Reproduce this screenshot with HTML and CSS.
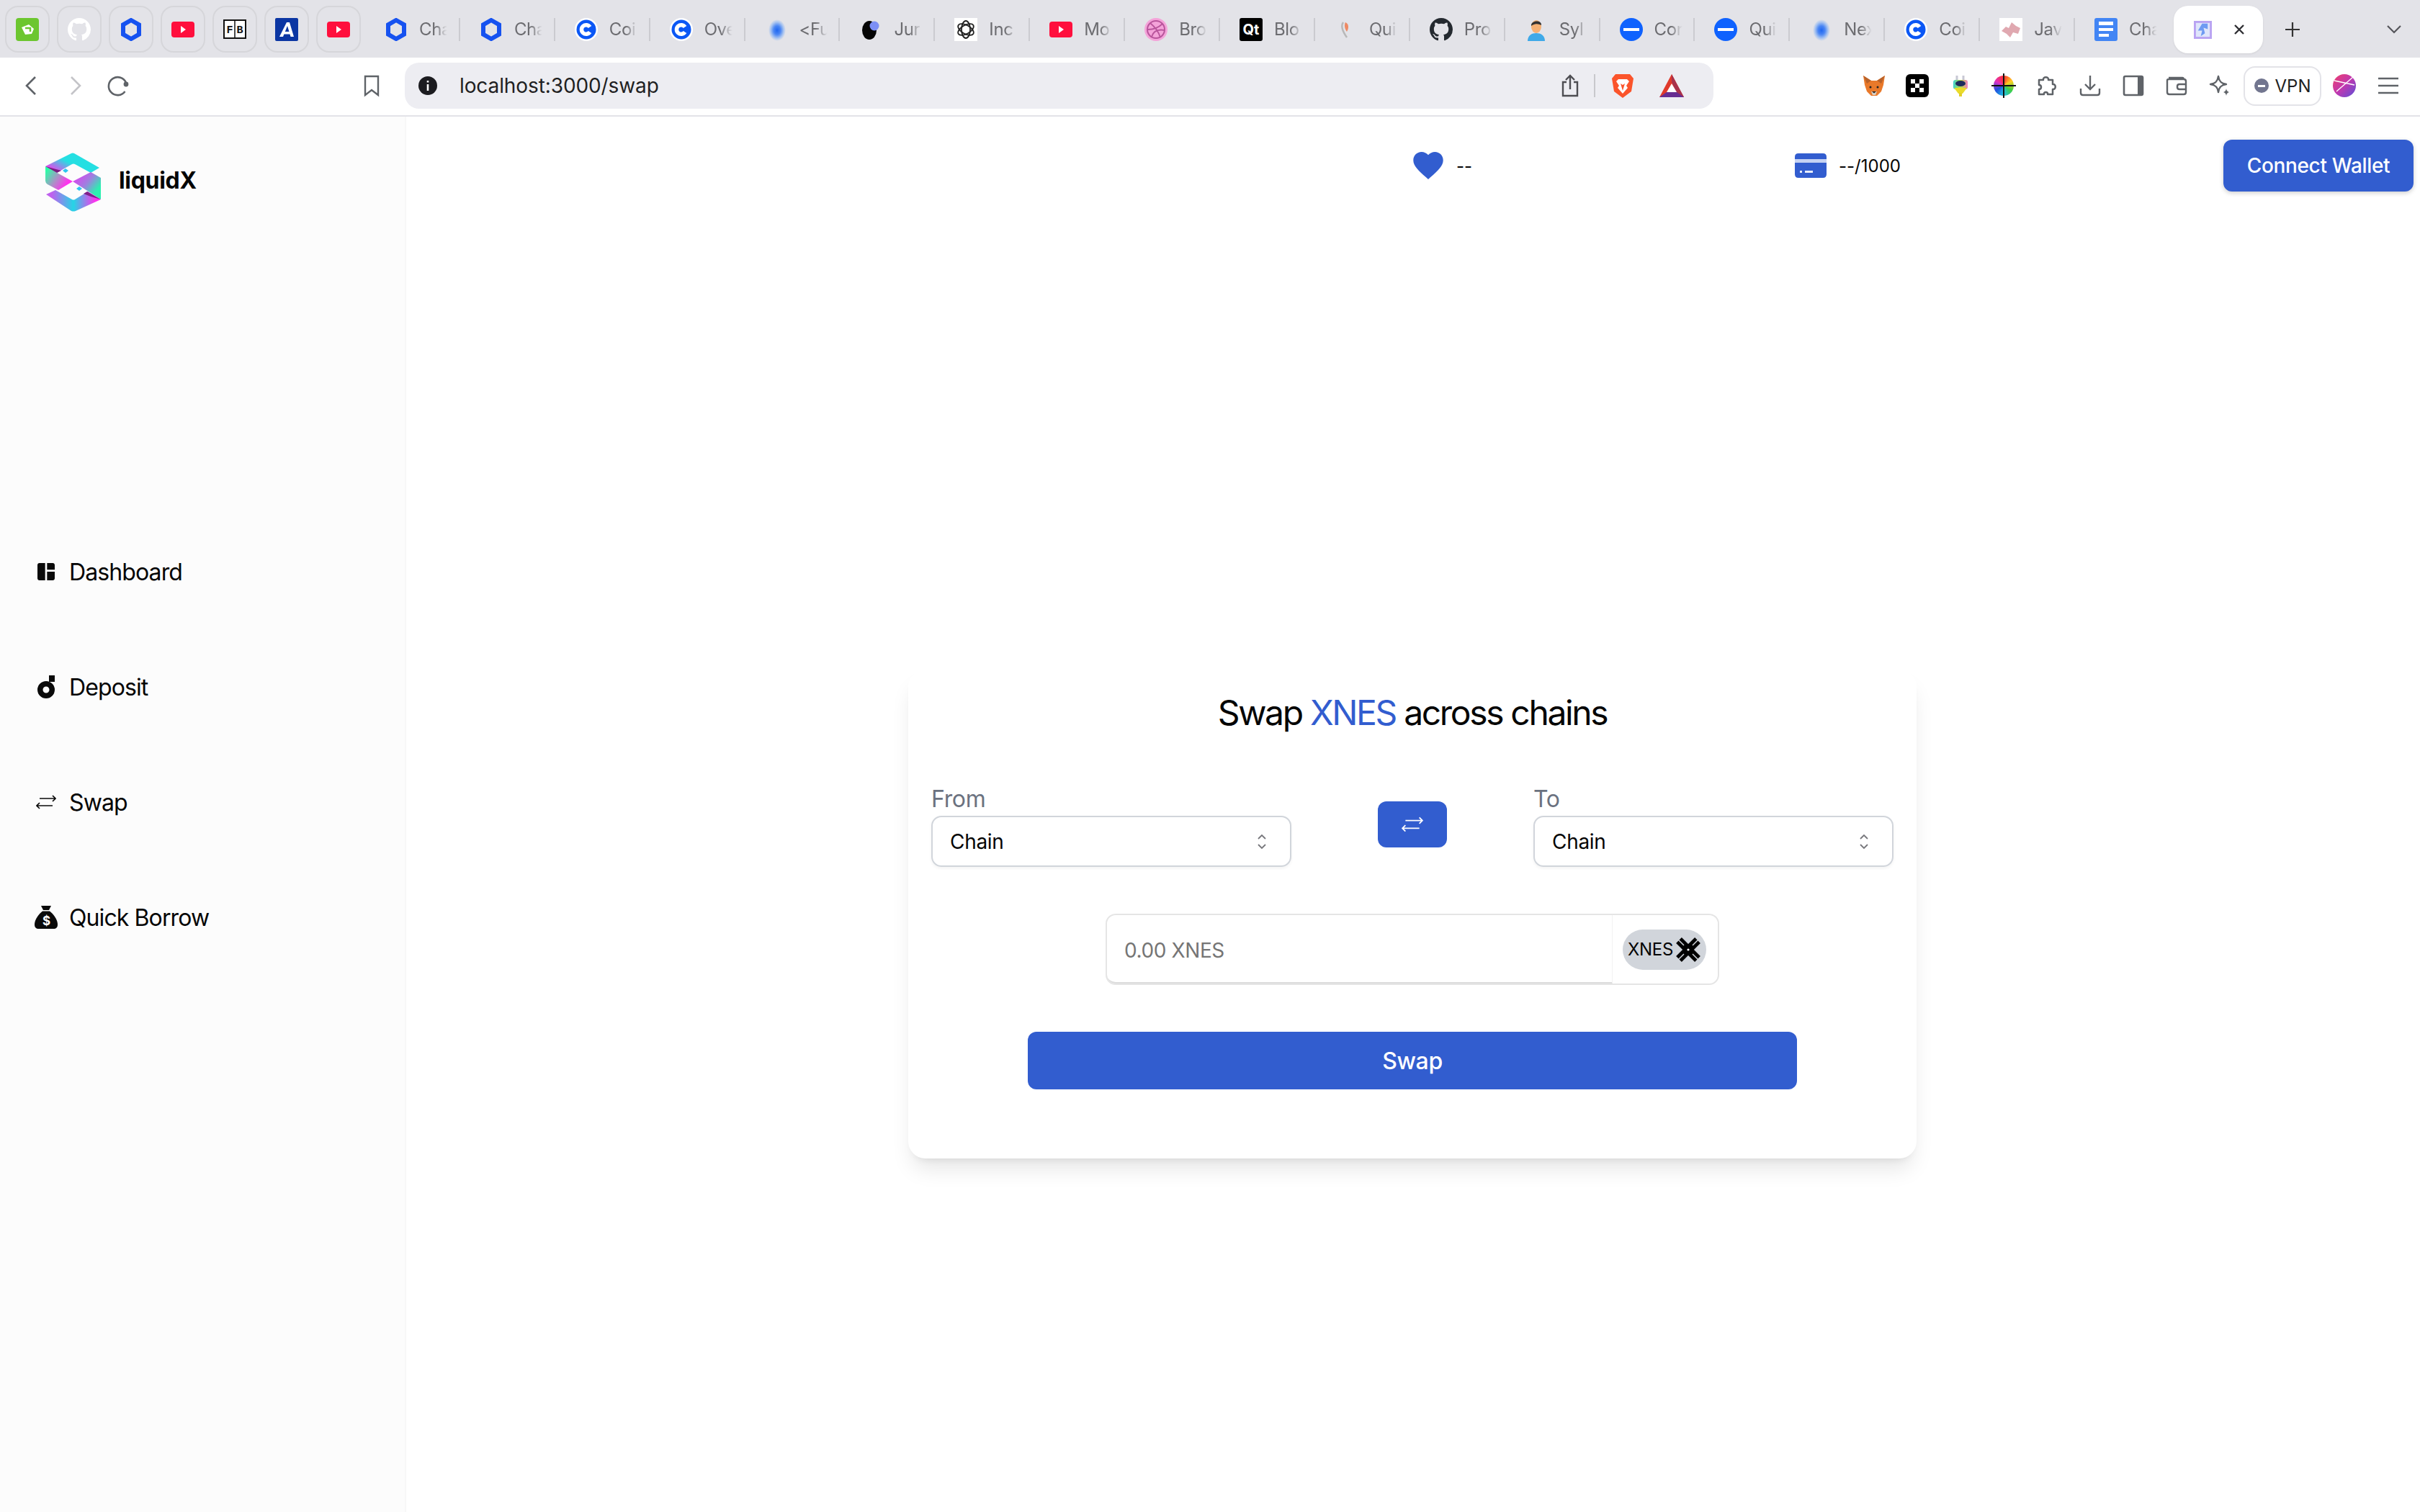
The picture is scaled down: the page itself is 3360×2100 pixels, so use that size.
FILE: index.html
```html
<!DOCTYPE html>
<html lang="en">
<head>
  <meta charset="UTF-8" />
  <title>liquidX - Swap</title>
  <link rel="stylesheet" href="styles.css">
</head>
<body>
  <!-- favicons used more than once -->
  <svg class="defs" width="0" height="0">
    <defs>
      <symbol id="i-hex" viewBox="0 0 28 32"><path d="M14 3 25 9.3V22.7L14 29 3 22.7V9.3Z" fill="none" stroke="#1652f0" stroke-width="6"/></symbol>
      <symbol id="i-yt" viewBox="0 0 32 32"><rect y="5" width="32" height="22" rx="4" fill="#ff0f3d"/><path d="M13 11 20 16 13 21Z" fill="#fff"/></symbol>
      <symbol id="i-coin" viewBox="0 0 32 32"><circle cx="16" cy="16" r="16" fill="#fff"/><circle cx="16" cy="16" r="13.500" fill="#0b57f5"/><path d="M21 12.500A6.300 6.300 0 1 0 21 19.500" fill="none" stroke="#fff" stroke-width="5.500"/></symbol>
      <symbol id="i-blob" viewBox="0 0 32 32"><ellipse cx="17" cy="17" rx="12" ry="15" fill="url(#blobfill)"/></symbol>
      <symbol id="i-minus" viewBox="0 0 32 32"><circle cx="16" cy="16" r="16" fill="#0f62fe"/><rect x="5" y="14" width="22" height="4" fill="#fff"/></symbol>
      <symbol id="i-gh" viewBox="0 0 16 16"><path d="M8 0C3.58 0 0 3.58 0 8c0 3.54 2.29 6.53 5.47 7.59.4.07.55-.17.55-.38 0-.19-.01-.82-.01-1.49-2.01.37-2.53-.49-2.69-.94-.09-.23-.48-.94-.82-1.13-.28-.15-.68-.52-.01-.53.63-.01 1.08.58 1.23.82.72 1.21 1.87.87 2.33.66.07-.52.28-.87.51-1.07-1.78-.2-3.64-.89-3.64-3.95 0-.87.31-1.59.82-2.15-.08-.2-.36-1.02.08-2.12 0 0 .67-.21 2.2.82.64-.18 1.32-.27 2-.27s1.36.09 2 .27c1.53-1.04 2.2-.82 2.2-.82.44 1.1.16 1.92.08 2.12.51.56.82 1.27.82 2.15 0 3.07-1.87 3.75-3.65 3.95.29.25.54.73.54 1.48 0 1.07-.01 1.93-.01 2.2 0 .21.15.46.55.38A8.013 8.013 0 0016 8c0-4.42-3.58-8-8-8z"/></symbol>
      <symbol id="i-arrows" viewBox="0 0 28 20"><path d="M5 5H27M23 1 27 5 23 9M23 15H1M5 11 1 15 5 19" fill="none" stroke="currentColor" stroke-width="1.700"/></symbol>
      <symbol id="i-updown" viewBox="0 0 14 22"><path d="M2 7 7 2 12 7M2 15 7 20 12 15" fill="none" stroke="#77777c" stroke-width="1.800"/></symbol>
      <radialGradient id="blobfill"><stop offset="0" stop-color="#1f66f0"/><stop offset=".4" stop-color="#4a86f4"/><stop offset=".75" stop-color="#a8c4f0"/><stop offset="1" stop-color="#e3e3e8"/></radialGradient>
      <linearGradient id="lg-top" x1="0" y1="1" x2="1" y2=".3"><stop offset=".12" stop-color="#ff32ee"/><stop offset=".55" stop-color="#25dfe2"/><stop offset="1" stop-color="#25dfe2"/></linearGradient>
      <linearGradient id="lg-left" x1="0" y1="0" x2="1" y2=".6"><stop offset=".1" stop-color="#2bffa6"/><stop offset=".55" stop-color="#b08cc8"/><stop offset=".9" stop-color="#ff32ee"/></linearGradient>
      <linearGradient id="lg-right" x1="0" y1="0" x2="1" y2=".8"><stop offset=".1" stop-color="#e040f0"/><stop offset=".5" stop-color="#a07fe0"/><stop offset=".85" stop-color="#2bf0b0"/></linearGradient>
      <linearGradient id="lg-bot" x1="0" y1=".4" x2="1" y2=".4"><stop offset=".1" stop-color="#c060ee"/><stop offset=".5" stop-color="#25d5e6"/><stop offset=".9" stop-color="#ff32ee"/></linearGradient>
      <linearGradient id="lg-ava" x1="0" y1="0" x2="1" y2="1"><stop offset="0" stop-color="#f0406a"/><stop offset=".5" stop-color="#c038b0"/><stop offset="1" stop-color="#5a50d8"/></linearGradient>
      <linearGradient id="lg-plug" x1="0" y1="0" x2="1" y2="0"><stop offset="0" stop-color="#3ad0d0"/><stop offset=".5" stop-color="#b8e040"/><stop offset="1" stop-color="#f080c0"/></linearGradient>
    </defs>
  </svg>

  <div class="tabstrip">
    <div class="pinned"><svg class="fav" viewBox="0 0 32 32"><rect width="32" height="32" rx="4" fill="#6cc62f"/><path d="M8 13 18 9 25 15 22 22 13 23Z" fill="#fff"/><path d="M13 14H20V19" fill="none" stroke="#6cc62f" stroke-width="2.500"/></svg></div>
    <div class="pinned"><svg class="fav fill-white"><use href="#i-gh"/></svg></div>
    <div class="pinned"><svg class="fav"><use href="#i-hex"/></svg></div>
    <div class="pinned"><svg class="fav"><use href="#i-yt"/></svg></div>
    <div class="pinned"><svg class="fav" viewBox="0 0 32 32"><rect x="1" y="3" width="30" height="25" fill="#fff" stroke="#111" stroke-width="2"/><path d="M16 3V28" stroke="#111" stroke-width="1.500"/><text class="fb-text" x="9" y="21">F</text><text class="fb-text" x="23" y="21">B</text></svg></div>
    <div class="pinned"><svg class="fav" viewBox="0 0 32 32"><rect width="32" height="32" rx="2" fill="#0b36a3"/><path d="M16 6 20 6 26 26H21.500L20.500 22.500H9.500L11.500 19H19.500L17 11 11 26H6Z" fill="#fff"/></svg></div>
    <div class="pinned"><svg class="fav"><use href="#i-yt"/></svg></div>

    <div class="tabs">
      <div class="tab"><svg class="fav"><use href="#i-hex"/></svg><span class="tab-title">Cha</span></div>
      <div class="tab"><svg class="fav"><use href="#i-hex"/></svg><span class="tab-title">Cha</span></div>
      <div class="tab"><svg class="fav"><use href="#i-coin"/></svg><span class="tab-title">Coi</span></div>
      <div class="tab"><svg class="fav"><use href="#i-coin"/></svg><span class="tab-title">Ove</span></div>
      <div class="tab"><svg class="fav"><use href="#i-blob"/></svg><span class="tab-title">&lt;Fu</span></div>
      <div class="tab"><svg class="fav" viewBox="0 0 32 32"><ellipse cx="14" cy="17" rx="10" ry="13" fill="#050505"/><circle cx="21" cy="11" r="6.500" fill="#7d8ff5"/></svg><span class="tab-title">Jur</span></div>
      <div class="tab"><svg class="fav" viewBox="0 0 32 32"><rect width="32" height="32" fill="#fff"/><g fill="none" stroke="#222" stroke-width="1.800"><ellipse cx="16" cy="16" rx="6" ry="12"/><ellipse cx="16" cy="16" rx="6" ry="12" transform="rotate(60 16 16)"/><ellipse cx="16" cy="16" rx="6" ry="12" transform="rotate(120 16 16)"/></g></svg><span class="tab-title">Inc</span></div>
      <div class="tab"><svg class="fav"><use href="#i-yt"/></svg><span class="tab-title">Mo</span></div>
      <div class="tab"><svg class="fav" viewBox="0 0 32 32"><circle cx="16" cy="16" r="16" fill="#f4a3d9"/><circle cx="16" cy="16" r="12" fill="none" stroke="#b9559c" stroke-width="2"/><path d="M8 7C14 12 20 20 22 27M5 16C12 16 20 13 25 8M10 26C12 19 17 15 28 17" fill="none" stroke="#b9559c" stroke-width="1.800"/></svg><span class="tab-title">Bro</span></div>
      <div class="tab"><svg class="fav" viewBox="0 0 32 32"><rect width="32" height="32" rx="3" fill="#000"/><text class="qt-text" x="16" y="23">Qt</text></svg><span class="tab-title">Blo</span></div>
      <div class="tab"><svg class="fav" viewBox="0 0 32 32"><path d="M12 6C9 10 10 17 17 27" fill="none" stroke="#b8b8b8" stroke-width="2.500"/><path d="M15 6C20 8 20 14 17 19 14 15 13 10 15 6Z" fill="#ee8a64"/></svg><span class="tab-title">Qui</span></div>
      <div class="tab"><svg class="fav fill-dark"><use href="#i-gh"/></svg><span class="tab-title">Pro</span></div>
      <div class="tab"><svg class="fav" viewBox="0 0 32 32"><path d="M4 32C4 24 10 21 16 21S28 24 28 32Z" fill="#3fa9e8"/><ellipse cx="16" cy="12" rx="7" ry="9" fill="#f5b073"/><path d="M9 11C8 3 24 2 23 10 19 8 14 7 9 11Z" fill="#333"/></svg><span class="tab-title">Syl</span></div>
      <div class="tab"><svg class="fav"><use href="#i-minus"/></svg><span class="tab-title">Con</span></div>
      <div class="tab"><svg class="fav"><use href="#i-minus"/></svg><span class="tab-title">Qui</span></div>
      <div class="tab"><svg class="fav"><use href="#i-blob"/></svg><span class="tab-title">Nex</span></div>
      <div class="tab"><svg class="fav"><use href="#i-coin"/></svg><span class="tab-title">Coi</span></div>
      <div class="tab"><svg class="fav" viewBox="0 0 32 32"><rect width="32" height="32" fill="#fff"/><path d="M3 18 9 12 13 14 17 6 23 11 29 14 26 22 19 20 15 27 10 22Z" fill="#e0a8b0"/></svg><span class="tab-title">Jav</span></div>
      <div class="tab"><svg class="fav" viewBox="0 0 32 32"><rect width="32" height="32" rx="3" fill="#4285f4"/><path d="M6 5H26V10H6ZM6 14H26V18H6ZM6 22H20V26H6Z" fill="#fff"/></svg><span class="tab-title">Cha</span></div>
    </div>

    <div class="tab-active">
      <svg class="fav-small" viewBox="0 0 26 26"><rect width="26" height="26" fill="#b9a3f2"/><rect x="3" y="3" width="20" height="20" fill="#dfe6fb"/><path d="M12 4H20V12L14 10 16 18 10 22 12 14 6 14Z" fill="#6e9bf2"/></svg>
      <svg class="tab-close" viewBox="0 0 16 16"><path d="M2 2 14 14M14 2 2 14" stroke="#2f2f33" stroke-width="2.400"/></svg>
    </div>
    <svg class="tab-plus" viewBox="0 0 22 22"><path d="M11 1V21M1 11H21" stroke="#333" stroke-width="2.200"/></svg>
    <svg class="tab-more" viewBox="0 0 20 12"><path d="M1 1 10 10 19 1" fill="none" stroke="#55555a" stroke-width="2.200"/></svg>
  </div>

  <div class="toolbar">
    <div class="tool"><svg class="ic" viewBox="0 0 32 32"><path d="M21 4 9 16 21 28" fill="none" stroke="#5f6368" stroke-width="2.600"/></svg></div>
    <div class="tool"><svg class="ic" viewBox="0 0 32 32"><path d="M11 4 23 16 11 28" fill="none" stroke="#c4c4c8" stroke-width="2.600"/></svg></div>
    <div class="tool"><svg class="ic" viewBox="0 0 32 32"><path d="M27 12A12.500 12.500 0 1 0 25.500 24" fill="none" stroke="#5f6368" stroke-width="2.600"/><circle cx="27" cy="14" r="3.400" fill="#5f6368"/></svg></div>
    <div class="tool bookmark"><svg class="ic" viewBox="0 0 32 32"><path d="M7 3H25V29L16 22 7 29Z" fill="none" stroke="#5f6368" stroke-width="2.400"/></svg></div>

    <div class="urlbar">
      <svg class="url-info" viewBox="0 0 26 26"><circle cx="13" cy="13" r="13" fill="#1c1c20"/><path d="M13 6V8.500M13 11V20" stroke="#fff" stroke-width="2.600"/></svg>
      <span class="url-text">localhost:3000/swap</span>
      <svg class="url-share" viewBox="0 0 24 32"><path d="M7 11H2V30H22V11H17M12 21V2M6 8 12 2 18 8" fill="none" stroke="#4d4d52" stroke-width="2.400"/></svg>
      <span class="url-sep"></span>
      <svg class="url-brave" viewBox="0 0 32 36"><path d="M6 2H26L31 8 28 26 16 35 4 26 1 8Z" fill="#fb542b"/><path d="M10 9H22L25 12 21 18 23 21 16 29 9 21 11 18 7 12Z" fill="#fff"/><path d="M13 15 16 17 19 15 16 25Z" fill="#fb542b"/></svg>
      <svg class="url-bat" viewBox="0 0 36 34"><path d="M18 1 35 33H1Z" fill="#e0392b"/><path d="M18 1 35 33H27L18 12Z" fill="#a8324c"/><path d="M18 14 25 26H11Z" fill="#fff"/><path d="M11 26H25L35 33H1Z" fill="#662d91"/></svg>
    </div>

    <div class="extensions">
      <div class="tool"><svg class="ic" viewBox="0 0 32 32"><path d="M1 2 12 9H20L31 2 29 15 26 24 20 30H12L6 24 3 15Z" fill="#e9792a"/><path d="M1 2 12 9 6 13ZM31 2 20 9 26 13Z" fill="#b8622a"/><path d="M12 24H20L18 29H14Z" fill="#d8cfc4"/><path d="M13 24H19L16 26.500Z" fill="#232323"/><circle cx="11" cy="18" r="1.500" fill="#222"/><circle cx="21" cy="18" r="1.500" fill="#222"/></svg></div>
      <div class="tool"><svg class="ic" viewBox="0 0 32 32"><rect width="32" height="32" rx="6" fill="#000"/><path d="M7 7H13V13H7ZM19 7H25V13H19ZM13 13H19V19H13ZM7 19H13V25H7ZM19 19H25V25H19Z" fill="#fff"/></svg></div>
      <div class="tool"><svg class="ic" viewBox="0 0 32 32"><path d="M11 2V9M20 2V9" stroke="#c8c8d4" stroke-width="3"/><rect x="6" y="8" width="20" height="13" rx="3" fill="url(#lg-plug)"/><path d="M7 19H25L19 27H13Z" fill="#eadb2a"/><path d="M14 26H18V31H14Z" fill="#e2cf2a"/><ellipse cx="16" cy="13" rx="7" ry="4" fill="#1e2c5c"/></svg></div>
      <div class="tool"><span class="wheel"></span></div>
      <div class="tool"><svg class="ic" viewBox="0 0 32 32"><path d="M5 8H11C10 3 19 3 18 8H24V14C29 13 29 22 24 21V28H17C18 24 11 24 12 28H5V21C9 21 9 15 5 15Z" fill="none" stroke="#5f6368" stroke-width="2.500" stroke-linejoin="round"/></svg></div>
      <div class="tool"><svg class="ic" viewBox="0 0 32 32"><path d="M16 2V20M9 14 16 21 23 14M3 20V26Q3 29 6 29H26Q29 29 29 26V20" fill="none" stroke="#5f6368" stroke-width="2.400"/></svg></div>
      <div class="tool"><svg class="ic" viewBox="0 0 32 32"><rect x="3" y="3" width="26" height="26" rx="2" fill="none" stroke="#5f6368" stroke-width="2.600"/><rect x="22" y="3" width="7" height="26" fill="#5f6368"/></svg></div>
      <div class="tool"><svg class="ic" viewBox="0 0 32 32"><path d="M5 5H24Q26 5 26 8M3 9Q3 7 5 7H26Q29 7 29 10V25Q29 28 26 28H6Q3 28 3 25ZM29 14H20Q17 14 17 17V18Q17 21 20 21H29" fill="none" stroke="#5f6368" stroke-width="2.400"/></svg></div>
      <div class="tool"><svg class="ic" viewBox="0 0 32 32"><path d="M14 3C15 10 18 13 25 14 18 15 15 18 14 25 13 18 10 15 3 14 10 13 13 10 14 3Z" fill="none" stroke="#5f6368" stroke-width="2.400" stroke-linejoin="round"/><path d="M25 20C25.500 23 26.500 24 29 25 26.500 26 25.500 27 25 30 24.500 27 23.500 26 21 25 23.500 24 24.500 23 25 20Z" fill="#5f6368"/></svg></div>
      <div class="vpn"><span class="vpn-dot"></span>VPN</div>
      <div class="tool tool-avatar"><svg class="ic" viewBox="0 0 32 32"><circle cx="16" cy="16" r="16" fill="url(#lg-ava)"/><path d="M2 9 30 15M5 24 28 4" stroke="#fff" stroke-width="1.300" fill="none"/></svg></div>
      <div class="tool tool-menu"><svg class="ic" viewBox="0 0 32 32"><path d="M2 6H30M2 16H30M2 26H30" stroke="#5f6368" stroke-width="2.600"/></svg></div>
    </div>
  </div>

  <div class="app">
    <aside class="sidebar">
      <div class="brand">
        <svg class="brand-logo" viewBox="0 0 100 100">
          <path d="M13 31 49 13Q51 12 53 13L88 33 76 40 54 28Q52 27 50 28L27 41Z" fill="url(#lg-top)"/>
          <path d="M13 31 27 41 35 37 24 34Z" fill="#7a1c80"/>
          <path d="M13 31 51 52 31 64 16 56Q13 54 13 51Z" fill="url(#lg-left)"/>
          <path d="M51 52 76 39 90 47V77Z" fill="url(#lg-right)"/>
          <path d="M14 70 27 64 50 77Q52 78 54 77L72 66 90 77 55 93Q52 94 49 93Z" fill="url(#lg-bot)"/>
          <path d="M71 66 90 77 76 73 66 69Z" fill="#80208a"/>
          <path d="M41 34 45 37 41 40 37 37ZM60 59 64 62 60 65 56 62Z" fill="#2cc8f0"/>
        </svg>
        <span class="brand-name">liquidX</span>
      </div>

      <nav class="nav">
        <a class="nav-item"><span class="nav-icon"><svg class="ic-dash" viewBox="3 3 18 18"><path d="M11 21H5c-1.100 0-2-.9-2-2V5c0-1.100.9-2 2-2h6v18zm2 0h6c1.100 0 2-.9 2-2v-7h-8v9zm8-11V5c0-1.100-.9-2-2-2h-6v7h8z"/></svg></span>Dashboard</a>
        <a class="nav-item"><span class="nav-icon"><svg class="ic-deposit" viewBox="0 0 24 32"><rect x="16" y="0" width="8" height="9"/><path fill-rule="evenodd" d="M12 8A12 12 0 1 1 12 32 12 12 0 0 1 12 8ZM12 15.500A4.500 4.500 0 1 0 12 24.500 4.500 4.500 0 0 0 12 15.500Z"/></svg></span>Deposit</a>
        <a class="nav-item"><span class="nav-icon"><svg class="ic-arrows"><use href="#i-arrows"/></svg></span>Swap</a>
        <a class="nav-item"><span class="nav-icon"><svg class="ic-bag" viewBox="0 0 32 32"><path d="M9 0H23L20 6H12Z"/><path d="M11 7.500H21C27 12 32 20 32 26 32 30 30 32 26 32H6C2 32 0 30 0 26 0 20 5 12 11 7.500Z"/><text class="bag-text" x="16" y="27">$</text></svg></span>Quick Borrow</a>
      </nav>
    </aside>

    <main class="main">
      <header class="topbar">
        <div class="stat"><svg class="ic-heart" viewBox="2 3 20 18.350"><path d="M12 21.350l-1.450-1.320C5.400 15.360 2 12.280 2 8.500 2 5.420 4.420 3 7.500 3c1.740 0 3.410.81 4.500 2.090C13.090 3.810 14.760 3 16.500 3 19.580 3 22 5.420 22 8.500c0 3.780-3.400 6.860-8.550 11.540L12 21.350z"/></svg><span>--</span></div>
        <div class="stat"><svg class="ic-card" viewBox="0 0 44 34"><path d="M5 0H39Q44 0 44 5V8H0V5Q0 0 5 0ZM0 13H44V29Q44 34 39 34H5Q0 34 0 29Z" fill="#325dcf"/><path d="M0 8H44V13H0Z" fill="#c5d2f3"/><path d="M7 24H10V27H7ZM14 24H25V27H14Z" fill="#e8edfb"/></svg><span>--/1000</span></div>
        <button class="connect-btn">Connect Wallet</button>
      </header>

      <section class="swap-card">
        <h2 class="swap-title">Swap <span class="accent">XNES</span> across chains</h2>

        <div class="chain-row">
          <div class="chain-field">
            <label class="chain-label">From</label>
            <div class="chain-select"><span>Chain</span><svg class="ic-updown"><use href="#i-updown"/></svg></div>
          </div>
          <button class="flip-btn"><svg class="ic-flip"><use href="#i-arrows"/></svg></button>
          <div class="chain-field">
            <label class="chain-label">To</label>
            <div class="chain-select"><span>Chain</span><svg class="ic-updown"><use href="#i-updown"/></svg></div>
          </div>
        </div>

        <div class="amount">
          <div class="amount-input">0.00 XNES</div>
          <div class="amount-token">
            <div class="token-pill">XNES<svg class="ic-xnes" viewBox="0 0 36 36"><path d="M5 5 31 31M31 5 5 31" stroke="#000" stroke-width="11"/><path d="M2 2 12 12M34 2 24 12M2 34 12 24M34 34 24 24" stroke="#d1d5db" stroke-width="1.500"/><circle cx="18" cy="18" r="1.600" fill="#fff"/></svg></div>
          </div>
        </div>

        <button class="swap-btn">Swap</button>
      </section>
    </main>
  </div>
</body>
</html>
```

FILE: styles.css
```css
* {
  box-sizing: border-box;
}
body {
  margin: 0;
  width: 3360px;
  height: 2100px;
  overflow: hidden;
  display: flex;
  flex-direction: column;
  background: white;
  color: #050505;
  font-family: Inter, "Noto Sans", sans-serif;
}
.defs {
  position: absolute;
}
svg {
  display: block;
  flex: none;
}

/* tab strip */
.tabstrip {
  height: 80px;
  flex: none;
  display: flex;
  align-items: flex-start;
  padding: 8px 0 0 7px;
  gap: 10px;
  background: #e3e3e8;
}
.pinned {
  width: 62px;
  height: 65px;
  flex: none;
  display: flex;
  align-items: center;
  justify-content: center;
  border: 2px solid #d6d6da;
  border-radius: 18px;
}
.fav {
  width: 32px;
  height: 32px;
}
.fill-white {
  fill: white;
}
.fill-dark {
  fill: #24292f;
}
.fb-text {
  font: 700 15px "Liberation Mono", monospace;
  text-anchor: middle;
  fill: #111;
}
.qt-text {
  font: 700 20px Inter, sans-serif;
  text-anchor: middle;
  fill: white;
}
.tabs {
  display: flex;
  margin-left: -4px;
}
.tab {
  width: 131.9px;
  height: 65px;
  flex: none;
  display: flex;
  align-items: center;
  gap: 16px;
  padding-left: 27px;
  position: relative;
}
.tab::after {
  content: "";
  position: absolute;
  right: 0;
  top: 17px;
  width: 2px;
  height: 32px;
  background: #cbcbd0;
}
.tab:last-child::after {
  display: none;
}
.tab-title {
  width: 44px;
  overflow: hidden;
  white-space: nowrap;
  font-size: 24px;
  letter-spacing: -0.4px;
  color: #6c6c70;
  -webkit-mask-image: linear-gradient(to right, black 50%, transparent 88%);
  mask-image: linear-gradient(to right, black 50%, transparent 88%);
}
.tab-active {
  width: 124px;
  height: 66px;
  flex: none;
  margin-left: -5px;
  display: flex;
  align-items: center;
  gap: 30px;
  padding-left: 28px;
  background: white;
  border-radius: 20px;
  box-shadow: 0 1px 3px rgba(0,0,0,0.08);
}
.fav-small {
  width: 25px;
  height: 25px;
}
.tab-close {
  width: 16px;
  height: 16px;
}
.tab-plus {
  width: 22px;
  height: 22px;
  margin: 22px 0 0 20px;
}
.tab-more {
  width: 20px;
  height: 12px;
  margin: 27px 0 0 110px;
}

/* toolbar */
.toolbar {
  height: 82px;
  flex: none;
  display: flex;
  align-items: center;
  padding: 0 0 2px 14px;
  background: white;
  border-bottom: 2px solid #e3e3e8;
}
.tool {
  width: 60px;
  height: 60px;
  flex: none;
  display: flex;
  align-items: center;
  justify-content: center;
}
.ic {
  width: 32px;
  height: 32px;
}
.bookmark {
  margin-left: 292px;
}
.urlbar {
  width: 1817px;
  height: 64px;
  margin-left: 16px;
  display: flex;
  align-items: center;
  padding: 0 40px 0 19px;
  background: #ededf2;
  border-radius: 20px;
}
.url-info {
  width: 26px;
  height: 26px;
}
.url-text {
  margin-left: 31px;
  font-size: 28px;
  letter-spacing: -0.1px;
  color: #1f1f22;
}
.url-share {
  width: 24px;
  height: 32px;
  margin-left: auto;
}
.url-sep {
  width: 2px;
  height: 32px;
  margin: 0 22px 0 21px;
  background: #c8c8cc;
}
.url-brave {
  width: 32px;
  height: 36px;
}
.url-bat {
  width: 36px;
  height: 34px;
  margin-left: 34px;
}
.extensions {
  display: flex;
  align-items: center;
  margin-left: 193px;
}
.wheel {
  width: 28px;
  height: 28px;
  border-radius: 50%;
  background: conic-gradient(#ff3030, #ffd020, #40d040, #20c0e0, #2050e0, #e030c0, #ff3030);
  position: relative;
}
.wheel::before,
.wheel::after {
  content: "";
  position: absolute;
  background: #111;
}
.wheel::before {
  left: 13px;
  top: -3px;
  width: 2px;
  height: 34px;
}
.wheel::after {
  left: -3px;
  top: 13px;
  width: 34px;
  height: 2px;
}
.vpn {
  width: 108px;
  height: 55px;
  margin-left: 3px;
  display: flex;
  align-items: center;
  justify-content: center;
  gap: 9px;
  border: 2px solid #e3e3e8;
  border-radius: 16px;
  font-size: 24px;
  color: #1f1f22;
}
.vpn-dot {
  width: 20px;
  height: 20px;
  border-radius: 50%;
  background: #72768f;
  position: relative;
}
.vpn-dot::after {
  content: "";
  position: absolute;
  left: 5px;
  top: 8.5px;
  width: 10px;
  height: 3px;
  background: white;
}
.tool-avatar {
  margin-left: 2px;
}
.tool-menu {
  margin-left: 1px;
}

/* app */
.app {
  flex: 1;
  display: flex;
  min-height: 0;
}
.sidebar {
  width: 564px;
  flex: none;
  padding: 38px 0 0 50px;
  background: #fcfcfc;
  border-right: 2px solid #f7f7f7;
}
.brand {
  display: flex;
  align-items: center;
  gap: 15px;
}
.brand-logo {
  width: 100px;
  height: 100px;
}
.brand-name {
  font-size: 32px;
  font-weight: 700;
  letter-spacing: -0.3px;
}
.nav {
  display: flex;
  flex-direction: column;
  gap: 112px;
  margin-top: 470px;
}
.nav-item {
  display: flex;
  align-items: center;
  height: 48px;
  font-size: 32px;
  letter-spacing: -0.9px;
  margin-left: -3px;
}
.nav-icon {
  width: 49px;
  flex: none;
  display: flex;
  justify-content: center;
  padding-right: 15px;
}
.ic-dash {
  width: 24px;
  height: 24px;
  fill: #0a0a0a;
}
.ic-deposit {
  width: 24px;
  height: 32px;
  fill: #0a0a0a;
}
.ic-arrows {
  width: 28px;
  height: 20px;
  color: #0a0a0a;
}
.ic-bag {
  width: 32px;
  height: 32px;
  fill: #0a0a0a;
}
.bag-text {
  font: 700 17px Inter, sans-serif;
  text-anchor: middle;
  fill: white;
}

.main {
  flex: 1;
  min-width: 0;
  margin-left: -2px;
}
.topbar {
  display: flex;
  align-items: center;
  height: 72px;
  margin-top: 32px;
  padding: 0 9px 0 1399px;
}
.stat {
  width: 531px;
  display: flex;
  align-items: center;
  gap: 17px;
  font-size: 24px;
}
.connect-btn {
  width: 264px;
  height: 72px;
  margin-left: auto;
  border: none;
  border-radius: 12px;
  background: #325dcf;
  color: white;
  font: 500 28px Inter, sans-serif;
  letter-spacing: -0.35px;
  box-shadow: 0 2px 6px rgba(0,0,0,0.2);
}
.ic-heart {
  width: 44px;
  height: 38px;
  fill: #325dcf;
}
.ic-card {
  width: 44px;
  height: 34px;
}
.swap-card {
  width: 1400px;
  height: 679px;
  margin: 664px auto 0;
  padding: 28px 32px 0;
  display: flex;
  flex-direction: column;
  align-items: center;
  background: white;
  border-radius: 24px;
  box-shadow: 0 20px 30px -6px rgba(0,0,0,0.1), 0 8px 12px -8px rgba(0,0,0,0.1);
}
.swap-title {
  margin: 0;
  font-size: 48px;
  line-height: 64px;
  font-weight: 400;
  letter-spacing: -2.35px;
}
.accent {
  color: #325dcf;
}
.chain-row {
  width: 100%;
  display: flex;
  align-items: center;
  justify-content: space-between;
  margin-top: 63px;
}
.chain-field {
  width: 500px;
}
.chain-label {
  display: block;
  height: 48px;
  font-size: 32px;
  line-height: 50px;
  letter-spacing: -0.3px;
  color: #6b7280;
}
.chain-select {
  height: 71px;
  display: flex;
  align-items: center;
  justify-content: space-between;
  padding: 0 32px 0 24px;
  font-size: 28px;
  letter-spacing: -0.3px;
  border: 2px solid #d1d5db;
  border-radius: 14px;
  box-shadow: 0 2px 4px rgba(0,0,0,0.05);
}
.ic-updown {
  width: 14px;
  height: 22px;
}
.flip-btn {
  width: 96px;
  height: 64px;
  display: flex;
  align-items: center;
  justify-content: center;
  border: none;
  border-radius: 12px;
  background: #325dcf;
}
.ic-flip {
  width: 30px;
  height: 22px;
  color: white;
}
.amount {
  width: 852px;
  height: 99px;
  margin-top: 65px;
  display: flex;
  border: 2px solid #e5e5e5;
  border-radius: 14px;
}
.amount-input {
  flex: 1;
  display: flex;
  align-items: center;
  padding: 4px 0 0 24px;
  font-size: 28px;
  letter-spacing: -0.4px;
  color: #757575;
  border-right: 1px solid #f3f3f3;
  border-bottom: 2px solid #dcdcdc;
  border-radius: 12px 0 0 12px;
}
.amount-token {
  width: 146px;
  display: flex;
  align-items: center;
  padding-left: 14px;
}
.token-pill {
  width: 116px;
  height: 56px;
  display: flex;
  align-items: center;
  gap: 3px;
  padding-left: 7px;
  border-radius: 28px;
  background: #d1d5db;
  font-size: 24px;
  letter-spacing: -0.3px;
}
.ic-xnes {
  width: 36px;
  height: 36px;
}
.swap-btn {
  width: 1068px;
  height: 80px;
  margin-top: 65px;
  border: none;
  border-radius: 12px;
  background: #325dcf;
  color: white;
  font: 500 32px Inter, sans-serif;
  letter-spacing: -0.4px;
}
```
